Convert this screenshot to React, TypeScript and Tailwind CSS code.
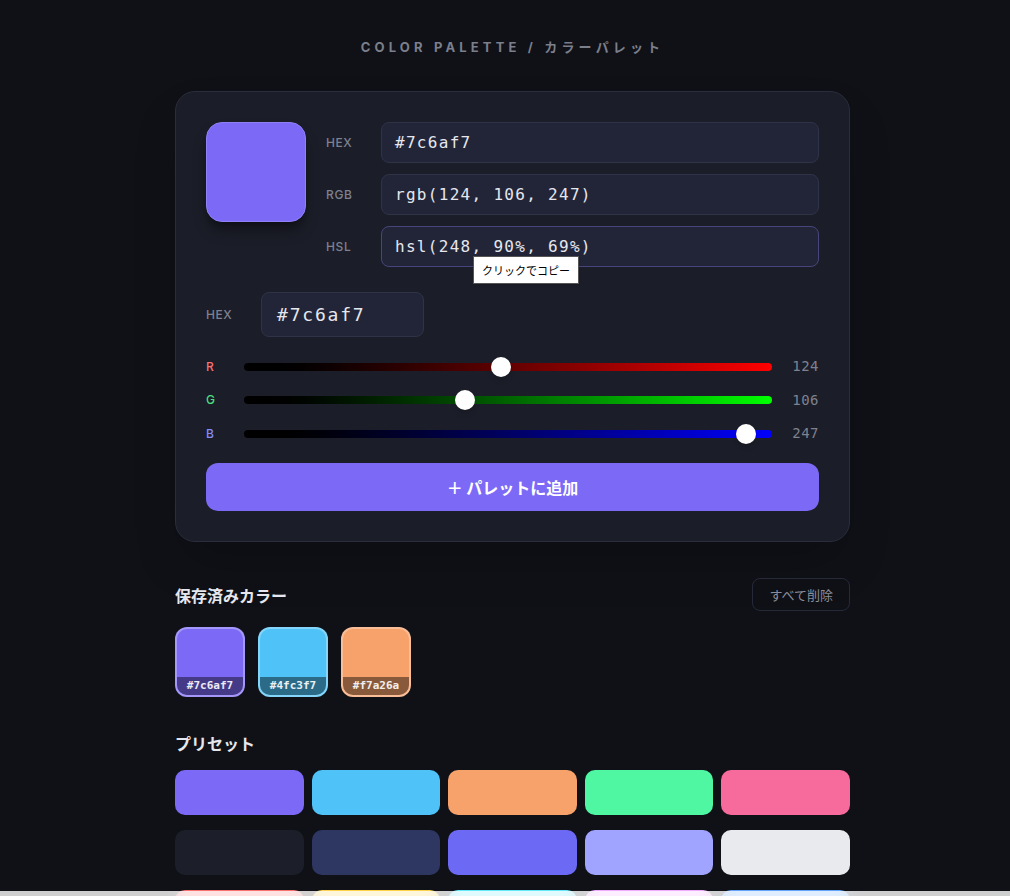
import React from 'react';

const sans = { fontFamily: 'Inter, "Noto Sans CJK JP", sans-serif' };
const jp = { fontFamily: '"Noto Sans CJK JP", sans-serif' };
const mono = { fontFamily: '"DejaVu Sans Mono", "Noto Sans CJK JP", monospace' };

const channels = [
  { key: 'R', value: 124, label: 'text-[#f87171]', track: 'bg-gradient-to-r from-[#000000] to-[#ff0000]' },
  { key: 'G', value: 106, label: 'text-[#4ade80]', track: 'bg-gradient-to-r from-[#000000] to-[#00ff00]' },
  { key: 'B', value: 247, label: 'text-[#818cf8]', track: 'bg-gradient-to-r from-[#000000] to-[#0000ff]' },
];

const saved = [
  { hex: '#7c6af7', bg: 'bg-[#7c6af7]' },
  { hex: '#4fc3f7', bg: 'bg-[#4fc3f7]' },
  { hex: '#f7a26a', bg: 'bg-[#f7a26a]' },
];

const presets = [
  'bg-[#7c6af7]',
  'bg-[#4fc3f7]',
  'bg-[#f7a26a]',
  'bg-[#4ff7a3]',
  'bg-[#f76a9c]',
  'bg-[#1c1e29]',
  'bg-[#2e3762]',
  'bg-[#6c6af5]',
  'bg-[#a1a4ff]',
  'bg-[#e9eaee]',
  'bg-[#f87171]',
  'bg-[#fcd34d]',
  'bg-[#67e8f9]',
  'bg-[#f0abfc]',
  'bg-[#60a5fa]',
];

const TRACK_W = 528;

const Slider = ({ value, track }: { value: number; track: string }) => {
  // native range thumb keeps its 20px inside the track
  const left = 10 + (value / 255) * (TRACK_W - 20);
  return (
    <div className="relative h-5 w-[528px]">
      <div className={`absolute left-0 right-0 top-[6px] h-2 rounded-full ${track}`} />
      <div
        className="absolute top-0 h-5 w-5 -translate-x-1/2 rounded-full bg-white shadow-md"
        style={{ left }}
      />
    </div>
  );
};

const App = () => {
  return (
    <div className="min-h-screen bg-[#0f1117] pl-[15px] pt-[40px] pb-10" style={sans}>
      <div className="mx-auto w-[675px]">
        {/* Title */}
        <h1 className="mb-[37px] text-center text-[13px] font-bold leading-[14px] tracking-[0.32em] text-[#7b7f8c]">
          COLOR PALETTE / カラーパレット
        </h1>

        {/* Editor card */}
        <div className="rounded-[20px] border border-[#2a2d3b] bg-[#1b1d28] p-[30px] shadow-2xl">
          <div className="flex">
            <div className="h-[100px] w-[100px] shrink-0 rounded-2xl border border-[#8f80f8] bg-[#7c6af7] shadow-lg shadow-black/40" />
            <div className="ml-5 flex flex-1 flex-col gap-[11px]">
              {[
                { l: 'HEX', v: '#7c6af7', b: 'border-[#2f3347]' },
                { l: 'RGB', v: 'rgb(124, 106, 247)', b: 'border-[#2f3347]' },
                { l: 'HSL', v: 'hsl(248, 90%, 69%)', b: 'border-[#48457c]' },
              ].map((row) => (
                <div key={row.l} className="relative flex items-center">
                  <span className="w-[55px] text-[12px] font-medium tracking-wider text-[#7e8290]">{row.l}</span>
                  <div
                    className={`flex h-[41px] flex-1 items-center rounded-lg border ${row.b} bg-[#222538] px-[13px] text-[16px] tracking-[1.3px] text-[#e6e7ee]`}
                    style={mono}
                  >
                    {row.v}
                  </div>
                  {row.l === 'HSL' && (
                    <div className="absolute left-[147px] top-[30px] z-10 border border-[#555] bg-white px-[8px] py-[3px] text-[11px] leading-[20px] text-black shadow-sm" style={jp}>
                      クリックでコピー
                    </div>
                  )}
                </div>
              ))}
            </div>
          </div>

          {/* Hex input */}
          <div className="mt-[25px] flex items-center">
            <span className="w-[55px] text-[12px] font-medium tracking-wider text-[#7e8290]">HEX</span>
            <div
              className="flex h-[45px] w-[163px] items-center rounded-lg border border-[#2f3347] bg-[#222538] px-[15px] text-[18px] tracking-[1.8px] text-[#e6e7ee]"
              style={mono}
            >
              #7c6af7
            </div>
          </div>

          {/* Sliders */}
          <div className="mt-[19px] flex flex-col gap-[12.5px]">
            {channels.map((c) => (
              <div key={c.key} className="flex items-center">
                <span className={`w-[38px] text-[12px] font-medium ${c.label}`}>{c.key}</span>
                <Slider value={c.value} track={c.track} />
                <span className="ml-auto text-[14px] tracking-[0.5px] text-[#7e8290]" style={mono}>
                  {c.value}
                </span>
              </div>
            ))}
          </div>

          <button className="mt-[19px] flex h-12 w-full items-center justify-center rounded-xl bg-[#7c6af7] text-[16px] font-semibold text-white" style={jp}>
            ＋ パレットに追加
          </button>
        </div>

        {/* Saved */}
        <div className="mt-9 flex items-center justify-between">
          <h2 className="text-[16px] font-bold text-[#e6e7ee]" style={jp}>保存済みカラー</h2>
          <button className="h-[33px] rounded-lg border border-[#262938] px-4 text-[13px] text-[#8a8d99]" style={jp}>
            すべて削除
          </button>
        </div>
        <div className="mt-4 flex gap-[13px]">
          {saved.map((s) => (
            <div key={s.hex} className={`relative flex h-[70px] w-[70px] items-end overflow-hidden rounded-xl border-2 border-white/30 ${s.bg}`}>
              <div className="w-full bg-black/45 py-[2px] text-center text-[11px] font-bold leading-[14px] text-white/90" style={mono}>
                {s.hex}
              </div>
            </div>
          ))}
        </div>

        {/* Presets */}
        <h2 className="mt-[34px] text-[16px] font-bold text-[#e6e7ee]" style={jp}>プリセット</h2>
        <div className="mt-[15px] grid grid-cols-5 gap-x-2 gap-y-[15px]">
          {presets.map((p, i) => (
            <div key={i} className={`h-[45px] rounded-[10px] ${p}`} />
          ))}
        </div>
      </div>
      <div className="fixed bottom-0 left-0 right-0 h-[5px] bg-white/80 backdrop-blur-sm" />
    </div>
  );
};

export default App;
